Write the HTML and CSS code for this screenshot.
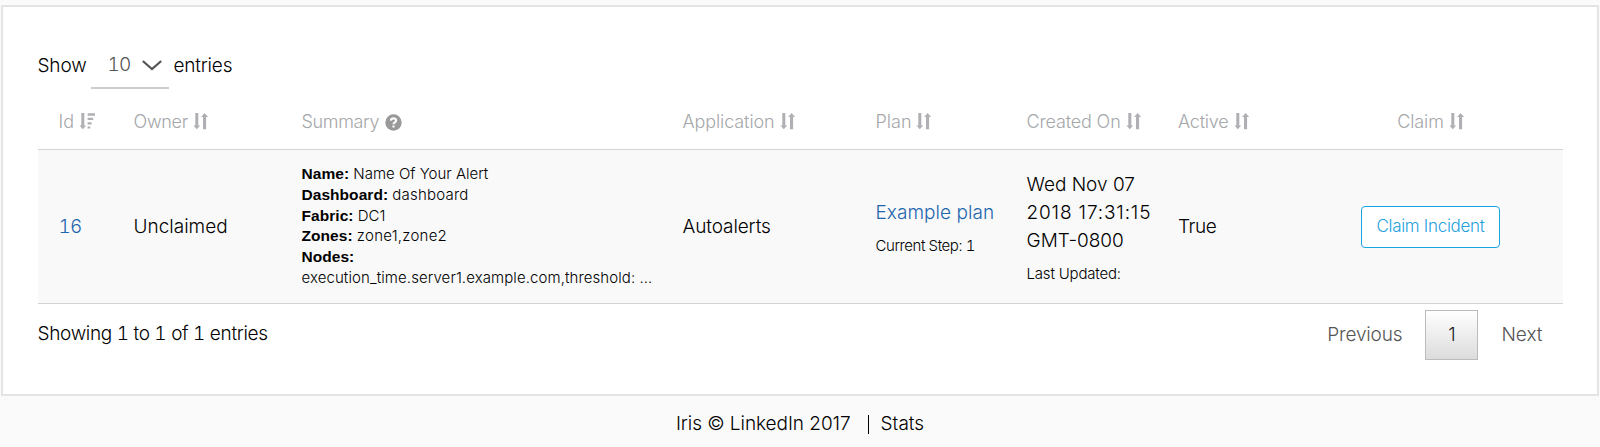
FILE: index.html
```html
<!DOCTYPE html>
<html lang="en">
<head>
<meta charset="utf-8">
<title>Iris incidents</title>
<link rel="stylesheet" href="styles.css">
</head>
<body>
<svg class="sprite" aria-hidden="true">
  <symbol id="sort" viewBox="0 0 16 18"><path d="M2.300 1h3v12.500h1.900L3.800 17.300.400 13.500h1.900zM10 17.300V5H8.100L11.600 1l3.500 4h-2v12.300z"/></symbol>
  <symbol id="sort-desc" viewBox="0 0 16 18"><path d="M2.300 1h3v12.500h1.900L3.800 17.300.400 13.500h1.900zM8.600 1.200H16v2.600H8.600zM8.600 5.800h5.600V8H8.600zM8.600 10.200h4v2.200h-4zM8.600 14.400h2.600v2.200H8.600z"/></symbol>
</svg>
<main class="card">
  <div class="length"><span class="t-show">Show</span><span class="select"><span class="t-ten">10</span><svg class="chevron" viewBox="0 0 20 11"><path d="M.8 1l9.200 8L19.200 1"/></svg></span><span class="t-entries">entries</span></div>
  <div class="row head">
    <div><span class="t-id">Id</span><svg class="sort"><use href="#sort-desc"/></svg></div>
    <div><span class="t-owner">Owner</span><svg class="sort"><use href="#sort"/></svg></div>
    <div><span class="t-summary">Summary</span><svg class="help" viewBox="0 0 17 17"><circle cx="8.500" cy="8.500" r="8.200"/><path d="M5.900 6.600C6 3.600 11.100 3.500 11.100 6.400 11.100 8.300 8.500 8.300 8.500 10.300M8.500 11.500v2.100"/></svg></div>
    <div><span class="t-app">Application</span><svg class="sort"><use href="#sort"/></svg></div>
    <div><span class="t-plan">Plan</span><svg class="sort"><use href="#sort"/></svg></div>
    <div><span class="t-created">Created On</span><svg class="sort"><use href="#sort"/></svg></div>
    <div><span class="t-active">Active</span><svg class="sort"><use href="#sort"/></svg></div>
    <div class="center"><span class="t-claim">Claim</span><svg class="sort"><use href="#sort"/></svg></div>
  </div>
  <div class="row body">
    <div><a class="t-16">16</a></div>
    <div><span class="t-unclaimed">Unclaimed</span></div>
    <div class="summary">
      <p><b>Name:</b> <span>Name Of Your Alert</span></p>
      <p><b>Dashboard:</b> <span class="v-dash">dashboard</span></p>
      <p><b>Fabric:</b> <span>DC1</span></p>
      <p><b>Zones:</b> <span class="v-zones">zone1,zone2</span></p>
      <p><b>Nodes:</b></p>
      <p><span class="v-nodes">execution_time.server1.example.com,threshold: …</span></p>
    </div>
    <div><span class="t-auto">Autoalerts</span></div>
    <div class="stack"><p><a class="t-example">Example plan</a></p><p class="note"><span class="t-step">Current Step: 1</span></p></div>
    <div class="stack"><p><span class="t-wed">Wed Nov 07</span></p><p><span class="t-time">2018 17:31:15</span></p><p><span class="t-gmt">GMT-0800</span></p><p class="note"><span class="t-last">Last Updated:</span></p></div>
    <div><span class="t-true">True</span></div>
    <div class="center"><button class="claim"><span class="t-incident">Claim Incident</span></button></div>
  </div>
  <div class="foot">
    <span class="info"><span class="t-showing">Showing 1 to 1 of 1 entries</span></span>
    <div class="pager"><span class="t-prev">Previous</span><span class="current">1</span><span class="t-next">Next</span></div>
  </div>
</main>
<footer class="footer"><span class="t-iris">Iris © LinkedIn 2017</span><span class="bar"></span><span class="t-stats">Stats</span></footer>
</body>
</html>
```
FILE: styles.css
```css
* { box-sizing: border-box; }
body { margin: 0; padding: 5px 1px 0; height: 447px; overflow: hidden; background: #fafafa; color: #000; font: 300 19px/28px Inter, "Liberation Sans", sans-serif; white-space: nowrap; }
p { margin: 0; }
a { color: #1f66ae; }
.sprite { position: absolute; width: 0; height: 0; }
.card { height: 391px; padding: 36px 34px 0 34.500px; border: 2px solid #e4e4e4; background: #fff; }
.length { display: flex; align-items: center; height: 46px; }
.length > span:first-child { width: 53px; }
.select { display: flex; align-items: center; width: 78px; height: 46px; padding-left: 17px; margin-right: 5px; border-bottom: 2px solid #ccc; color: #555; }
.chevron { width: 20px; height: 11px; margin-left: 12px; fill: none; stroke: #555; stroke-width: 2.200; }
.row { display: grid; grid-template-columns: 75px 168px 381px 193px 151px 151.500px 142px 1fr; border-bottom: 1px solid #d4d4d4; }
.row > div { display: flex; align-items: center; padding-left: 21px; }
.row > .center { justify-content: center; padding: 0; }
.row > .stack, .row > .summary { display: block; }
.head { height: 61px; padding-top: 5px; color: #a5a7aa; font-size: 18px; }
.sort { width: 16px; height: 18px; margin: 0 0 1px 5px; fill: #aeb0b3; }
.help { width: 17px; height: 17px; margin: 1px 0 0 6px; fill: #999; }
.help path { fill: none; stroke: #fff; stroke-width: 2.200; }
.body { height: 154px; background: #f9f9f9; }
.row > .summary { padding-top: 13px; font-size: 15px; line-height: 21px; }
.summary p { height: 20.800px; }
.summary b { font: bold 15.500px/20px "Liberation Sans", sans-serif; letter-spacing: 0.050px; }
.row > .stack { align-self: center; padding-top: 5px; }
.note { margin-top: 5px; font-size: 15px; }
.claim { width: 139px; height: 42px; margin-right: 1px; padding: 0 0 2px; border: 1px solid #17a5e0; border-radius: 4px; background: #fff; color: #1f9fdc; font: inherit; font-size: 17px; }
.foot { display: flex; justify-content: space-between; padding-top: 6px; }
.info { padding-top: 10px; }
.pager { display: flex; align-items: center; height: 50px; padding-right: 20.500px; color: #555; }
.current { display: flex; align-items: center; justify-content: center; width: 53px; height: 50px; margin: 0 23px; border: 1px solid #bbb; background: linear-gradient(#fff, #dcdcdc); color: #222; }
.footer { display: flex; align-items: center; justify-content: center; height: 56px; }
.bar { width: 1px; height: 19px; margin: 0 12px 0 17px; background: #000; }

/* Text fitting */
.t-show { letter-spacing: -0.150px; }
.t-16, .t-ten, .t-step, .t-showing { font-variant-numeric: tabular-nums; }
.t-16, .t-ten { letter-spacing: -0.900px; }
.t-entries { letter-spacing: -0.200px; }
.t-owner { letter-spacing: -0.270px; }
.t-summary { letter-spacing: -0.350px; }
.t-app { letter-spacing: -0.100px; }
.t-created { letter-spacing: -0.150px; }
.t-active { letter-spacing: -0.200px; }
.t-claim { letter-spacing: -0.100px; }
.v-dash { letter-spacing: 0.200px; }
.v-zones { letter-spacing: 0.250px; }
.v-nodes { letter-spacing: 0.090px; }
.t-example { letter-spacing: 0.050px; }
.t-auto { letter-spacing: -0.100px; }
.t-step { letter-spacing: -0.420px; }
.t-time { letter-spacing: 0.850px; }
.t-last { letter-spacing: -0.190px; }
.t-true { letter-spacing: -0.390px; }
.t-incident { letter-spacing: -0.300px; }
.t-showing { letter-spacing: -0.320px; }
.t-prev { letter-spacing: -0.150px; }
.t-iris { letter-spacing: -0.050px; }
```
